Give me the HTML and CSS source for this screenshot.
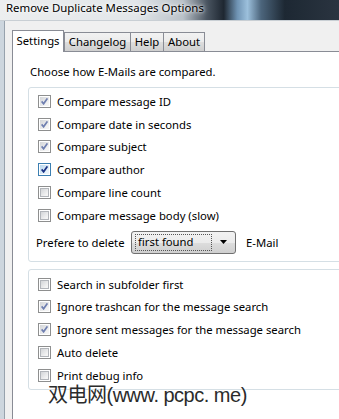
FILE: index.html
```html
<!DOCTYPE html>
<html lang="en">
<head>
    <meta charset="UTF-8">
    <title>Remove Duplicate Messages Options</title>
    <link rel="stylesheet" href="styles.css">
</head>
<body>
    <div class="titlebar">Remove Duplicate Messages Options</div>

    <div class="client">
        <!-- Tabs -->
        <div class="tabs">
            <div class="tab tab-selected tab-settings">Settings</div>
            <div class="tab tab-changelog">Changelog</div>
            <div class="tab tab-help">Help</div>
            <div class="tab tab-about">About</div>
        </div>

        <div class="panel">
            <p class="intro">Choose how E-Mails are compared.</p>

            <div class="group group-compare">
                <div class="row"><span class="box checked"></span><span class="label">Compare message ID</span></div>
                <div class="row"><span class="box checked"></span><span class="label">Compare date in seconds</span></div>
                <div class="row"><span class="box checked"></span><span class="label">Compare subject</span></div>
                <div class="row"><span class="box checked hot"></span><span class="label">Compare author</span></div>
                <div class="row"><span class="box"></span><span class="label">Compare line count</span></div>
                <div class="row"><span class="box"></span><span class="label">Compare message body (slow)</span></div>

                <div class="delete-row">
                    <span class="delete-label">Prefere to delete</span>
                    <div class="select">
                        <span class="select-value">first found</span>
                        <svg class="select-arrow" width="7" height="4" viewBox="0 0 7 4"><path d="M0 0H7L3.5 4Z" fill="#000"/></svg>
                    </div>
                    <span class="delete-unit">E-Mail</span>
                </div>
            </div>

            <div class="group group-search">
                <div class="row"><span class="box"></span><span class="label">Search in subfolder first</span></div>
                <div class="row"><span class="box checked"></span><span class="label">Ignore trashcan for the message search</span></div>
                <div class="row"><span class="box checked"></span><span class="label">Ignore sent messages for the message search</span></div>
                <div class="row"><span class="box"></span><span class="label">Auto delete</span></div>
                <div class="row"><span class="box"></span><span class="label">Print debug info</span></div>
            </div>
        </div>
    </div>

    <div class="watermark">双电网(www. pcpc. me)</div>
</body>
</html>
```

FILE: styles.css
```css
body {
    margin: 0;
    width: 339px;
    height: 419px;
    overflow: hidden;
    position: relative;
    background-color: #f0f0f0;
    font-family: "Noto Sans", sans-serif;
    font-size: 11.3px;
    color: #000;
}
.titlebar {
    height: 20px;
    line-height: 16px;
    padding-left: 6px;
    font-size: 11.4px;
    border-bottom: 1px solid #c9cfd4;
    background: linear-gradient(90deg, #eceeef 0%, #e2e6e9 40%, #b9c1c8 54%, #4a5561 61%, #1e2731 66%, #6f93b3 70%, #9cc0dc 73%, #4c657c 77%, #1d2833 84%, #2a3440 100%);
    text-shadow: 0 0 6px #fff, 0 0 3px #fff;
    white-space: nowrap;
}
.client {
    padding: 9px 0 0 8px;
    border-left: 4px solid #cdd6de;
    box-shadow: inset 1px 0 0 #97a2ad;
    height: 389px;
    overflow: hidden;
}

/* Tabs */
.tabs {
    display: flex;
    align-items: flex-end;
    height: 21px;
}
.tab {
    box-sizing: border-box;
    height: 19px;
    line-height: 17px;
    text-align: center;
    border: 1px solid #898c95;
    border-bottom: none;
    margin-left: -1px;
    white-space: nowrap;
    background: linear-gradient(#f2f2f2, #ebebeb 50%, #dddddd 51%, #cfcfcf);
}
.tab-selected {
    height: 22px;
    line-height: 19px;
    margin-left: 0;
    margin-bottom: -1px;
    background: #fff;
    position: relative;
    z-index: 1;
}
.tab-settings { width: 52px; }
.tab-changelog { width: 67px; margin-left: 0; }
.tab-help { width: 34px; }
.tab-about { width: 42px; }

.panel {
    margin-right: -40px;
    height: 380px;
    background: #fff;
    border: 1px solid #898c95;
    padding-top: 12px;
}
.intro {
    margin: 0 0 7px 17px;
    line-height: 16px;
}

/* Group boxes */
.group {
    margin: 0 -20px 0 15px;
    border: 1px solid #d5dfe5;
    border-radius: 3px;
    padding: 2px 0 7px 0;
}
.group-search {
    margin-top: 7px;
    padding: 3px 0 2px 0;
}
.row {
    display: flex;
    align-items: center;
    height: 22.8px;
}
.box {
    box-sizing: border-box;
    width: 13px;
    height: 13px;
    margin-left: 9px;
    border: 1px solid #8e8f8f;
    background: #fff;
    padding: 1px;
    flex: none;
}
.box::before {
    content: "";
    display: block;
    width: 9px;
    height: 9px;
    box-sizing: border-box;
    border: 1px solid #b2b5ba;
    background: linear-gradient(135deg, #d3d5d8, #f4f4f4 80%);
}
.box.checked::before {
    background: url("data:image/svg+xml;utf8,<svg xmlns='http://www.w3.org/2000/svg' width='7' height='7' viewBox='0 0 7 7'><path d='M0.6 3.4 L2.6 5.8 L6.4 0.4' fill='none' stroke='%236f7fb0' stroke-width='1.7'/></svg>") center / 7px 7px no-repeat, linear-gradient(135deg, #d3d5d8, #f4f4f4 80%);
    border: none;
}
.box.hot {
    border-color: #3c7fb1;
}
.box.hot::before {
    background: url("data:image/svg+xml;utf8,<svg xmlns='http://www.w3.org/2000/svg' width='7' height='7' viewBox='0 0 7 7'><path d='M0.6 3.4 L2.6 5.8 L6.4 0.4' fill='none' stroke='%231b3385' stroke-width='1.8'/></svg>") center / 7px 7px no-repeat, linear-gradient(135deg, #b9d7ee, #eaf4fb 80%);
}
.label {
    margin-left: 6px;
    white-space: nowrap;
}

/* Delete preference */
.delete-row {
    display: flex;
    align-items: center;
    margin-top: 4px;
    white-space: nowrap;
}
.delete-label {
    flex: none;
    width: 95px;
    padding-left: 7px;
}
.select {
    flex: none;
    box-sizing: border-box;
    width: 105px;
    height: 23px;
    border: 1px solid #707070;
    border-radius: 3px;
    background: linear-gradient(#f2f2f2, #ebebeb 50%, #dddddd 51%, #cfcfcf);
    display: flex;
    align-items: center;
    padding: 0 8px 0 3px;
}
.select-value {
    flex: 1;
    height: 15px;
    line-height: 14px;
    border: 1px dotted #555;
    padding-left: 2px;
    margin-right: 8px;
}
.select-arrow {
    flex: none;
}
.delete-unit {
    margin-left: 10px;
}

.watermark {
    position: absolute;
    left: 48px;
    top: 385px;
    line-height: 20px;
    font-family: "Liberation Sans", "Noto Sans CJK SC", sans-serif;
    font-size: 20px;
    letter-spacing: -0.5px;
    color: #2b2b2b;
    text-shadow: 0 0 2px #fff;
    white-space: nowrap;
}
```
